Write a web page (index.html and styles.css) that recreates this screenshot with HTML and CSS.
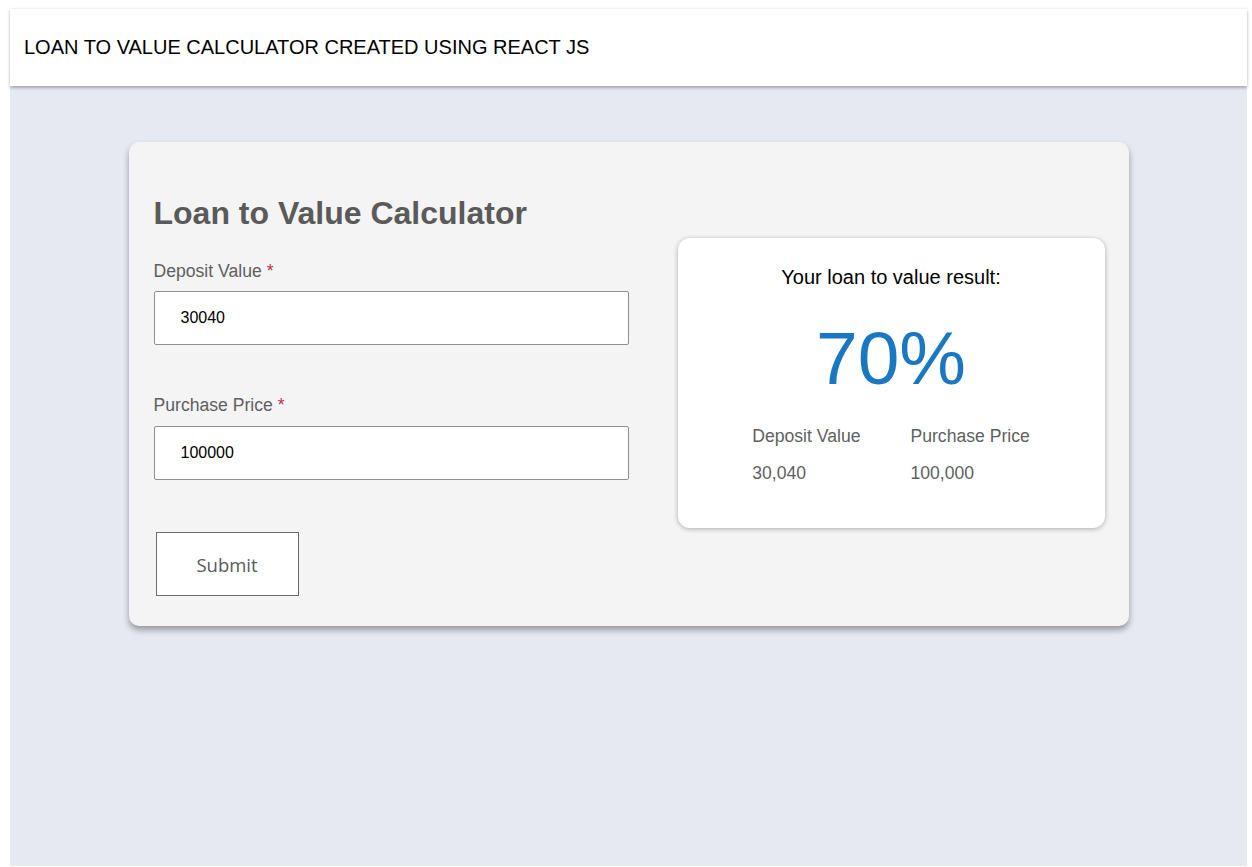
FILE: index.html
```html
<!DOCTYPE html>
<html lang="en">
<head>
<meta charset="utf-8">
<title>Loan to Value Calculator</title>
<link rel="stylesheet" href="styles.css">
</head>
<body>
<div class="app">
  <header class="topbar">LOAN TO VALUE CALCULATOR CREATED USING REACT JS</header>
  <main class="main">
    <section class="card">
      <form class="form">
        <h1 class="title">Loan to Value Calculator</h1>
        <label class="label" for="deposit">Deposit Value <span class="req">*</span></label>
        <input class="input" id="deposit" type="text" value="30040">
        <label class="label label-gap" for="price">Purchase Price <span class="req">*</span></label>
        <input class="input" id="price" type="text" value="100000">
        <button class="submit" type="button">Submit</button>
      </form>
      <div class="result">
        <p class="result-title">Your loan to value result:</p>
        <p class="result-value">70%</p>
        <div class="details">
          <div class="detail">
            <div class="detail-label">Deposit Value</div>
            <div class="detail-value">30,040</div>
          </div>
          <div class="detail">
            <div class="detail-label">Purchase Price</div>
            <div class="detail-value">100,000</div>
          </div>
        </div>
      </div>
    </section>
  </main>
</div>
</body>
</html>
```

FILE: styles.css
```css
html, body {
  height: 100%;
}
body {
  margin: 0;
  padding: 9px 5px 1px 10px;
  box-sizing: border-box;
  background: #ffffff;
  font-family: "Liberation Sans", Arial, sans-serif;
}
.app {
  background: #e6e9f2;
  min-height: 100%;
  display: flex;
  flex-direction: column;
}
.topbar {
  background: #ffffff;
  height: 77px;
  box-sizing: border-box;
  padding: 27px 14px;
  font-size: 20px;
  line-height: 23px;
  color: #000;
  box-shadow: 0 2px 3px rgba(0, 0, 0, 0.28), 0 -1px 2px rgba(0, 0, 0, 0.06);
  position: relative;
  z-index: 1;
}
.main {
  display: flex;
  justify-content: center;
  padding-top: 56px;
}
.card {
  width: 1000px;
  box-sizing: border-box;
  background: #f4f4f4;
  border-radius: 10px;
  padding: 52px 24px 30px 25px;
  display: flex;
  align-items: flex-start;
  gap: 49px;
  box-shadow: 0 4px 6px rgba(0, 0, 0, 0.35);
}
.form {
  width: 475px;
  display: flex;
  flex-direction: column;
  align-items: flex-start;
}
.title {
  margin: 0 0 29px;
  font-size: 32px;
  line-height: 38px;
  font-weight: bold;
  color: #5a5a5a;
}
.label {
  font-size: 17.6px;
  line-height: 20px;
  color: #5f5f5f;
  margin-bottom: 10px;
}
.label-gap {
  margin-top: 50px;
  margin-bottom: 11px;
}
.req {
  color: #c4314b;
}
.input {
  width: 475px;
  height: 54px;
  box-sizing: border-box;
  margin: 0;
  border: 1px solid #8f8f94;
  border-radius: 2px;
  background: #fff;
  padding: 0 26px;
  font-family: "Liberation Sans", Arial, sans-serif;
  font-size: 16px;
  color: #000;
  outline: none;
}
.submit {
  margin: 52px 0 0 2px;
  width: 143px;
  height: 64px;
  background: #fff;
  border: 1px solid #6b6b6b;
  border-radius: 0;
  font-family: "Open Sans", "Noto Sans", sans-serif;
  font-size: 18.5px;
  color: #5a5a5a;
  padding: 0;
}
.result {
  width: 427px;
  height: 290px;
  box-sizing: border-box;
  margin-top: 44px;
  background: #fff;
  border-radius: 12px;
  box-shadow: 0 1px 5px rgba(0, 0, 0, 0.3);
  padding-top: 28px;
  text-align: center;
}
.result-title {
  margin: 0;
  font-size: 20px;
  line-height: 23px;
  color: #000;
}
.result-value {
  margin: 25px 0 0;
  font-size: 75px;
  line-height: 88px;
  color: #1a78c2;
}
.details {
  display: flex;
  justify-content: center;
  gap: 50px;
  margin-top: 24px;
  text-align: left;
}
.detail-label,
.detail-value {
  font-size: 17.6px;
  line-height: 20px;
  color: #5f5f5f;
}
.detail-value {
  margin-top: 17px;
}
```
